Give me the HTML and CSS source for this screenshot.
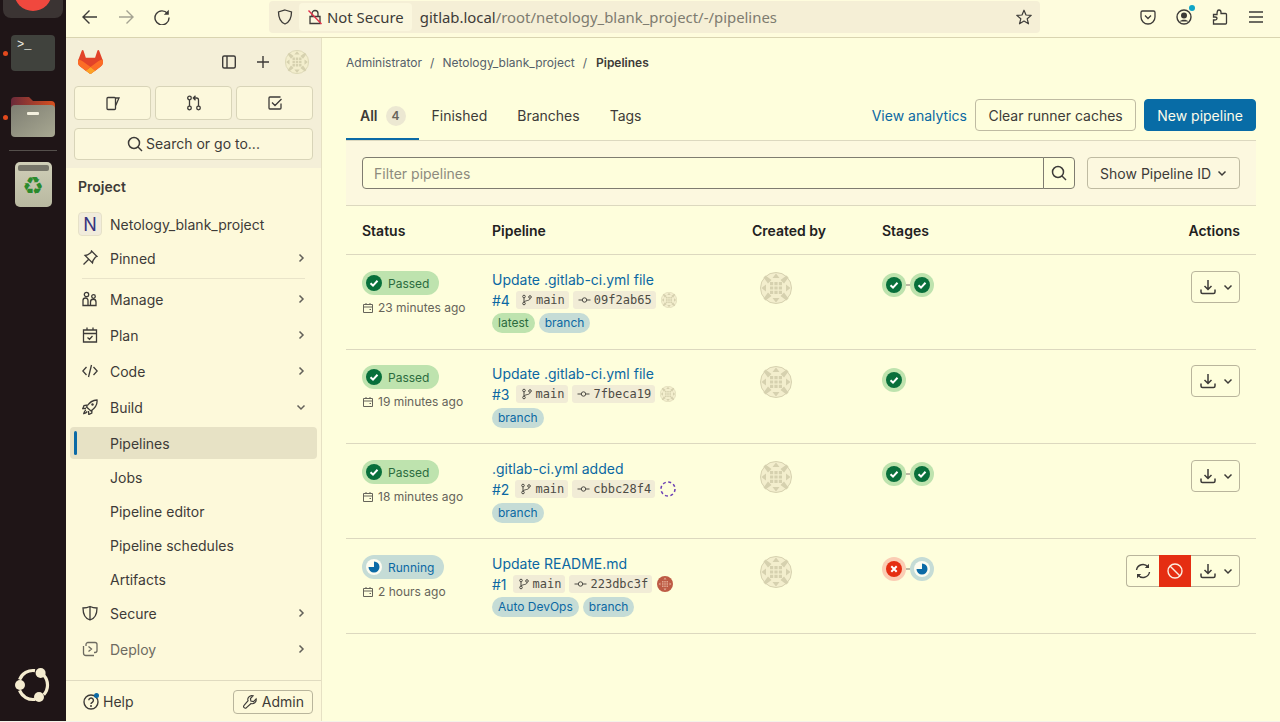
FILE: index.html
```html
<!DOCTYPE html>
<html>
<head>
    <title>Pipelines</title>
    <link rel="stylesheet" href="styles.css">
</head>
<body>
    <svg class="sprite" xmlns="http://www.w3.org/2000/svg">
        <symbol id="identicon" viewBox="0 0 32 32">
            <circle cx="16" cy="16" r="15.5" fill="#f3eecd" stroke="#d6d1af"/>
            <path d="M5.500 3.500 11.500 8 8 11.500 3.500 5.500zM26.500 3.500 20.500 8 24 11.500 28.500 5.500zM5.500 28.500 11.500 24 8 20.500 3.500 26.500zM26.500 28.500 20.500 24 24 20.500 28.500 26.500z" fill="#d6d1af"/>
            <path d="M16 1.500 19.500 6H12.500zM16 30.500 19.500 26H12.500zM1.500 16 6 12.500V19.500zM30.500 16 26 12.500V19.500z" fill="#d6d1af"/>
            <path d="M10 10h3.200v3.200h-3.200zM14.400 10h3.200v3.200h-3.200zM18.800 10h3.200v3.200h-3.200zM10 14.400h3.200v3.200h-3.200zM14.400 14.400h3.200v3.200h-3.200zM18.800 14.400h3.200v3.200h-3.200zM10 18.800h3.200v3.200h-3.200zM14.400 18.800h3.200v3.200h-3.200zM18.800 18.800h3.200v3.200h-3.200z" fill="#d6d1af"/>
        </symbol>
        <symbol id="identicon-red" viewBox="0 0 32 32">
            <circle cx="16" cy="16" r="16" fill="#bd5a44"/>
            <path d="M10 10h3v3h-3zM14.500 10h3v3h-3zM19 10h3v3h-3zM10 14.500h3v3h-3zM14.500 14.500h3v3h-3zM19 14.500h3v3h-3zM10 19h3v3h-3zM14.500 19h3v3h-3zM19 19h3v3h-3z" fill="#e0a58f"/>
            <path d="M16 3 19 7H13zM16 29 19 25H13zM3 16 7 13V19zM29 16 25 13V19z" fill="#e0a58f"/>
        </symbol>
        <symbol id="ci-passed" viewBox="0 0 16 16">
            <circle cx="8" cy="8" r="8" fill="#086f3b"/>
            <path d="M4.500 8.300 7 10.600 11.500 5.800" fill="none" stroke="#fff" stroke-width="2"/>
        </symbol>
        <symbol id="ci-failed" viewBox="0 0 16 16">
            <circle cx="8" cy="8" r="8" fill="#e52e12"/>
            <path d="M5.300 5.300 10.700 10.700M10.700 5.300 5.300 10.700" fill="none" stroke="#fff" stroke-width="2"/>
        </symbol>
        <symbol id="ci-running" viewBox="0 0 16 16">
            <circle cx="8" cy="8" r="8" fill="#fdfcf0"/>
            <path d="M8 2.500A5.500 5.500 0 1 1 2.500 8H8z" fill="#0b6aa6"/>
        </symbol>
        <symbol id="i-download" viewBox="0 0 16 16">
            <path d="M8 1v9M4.500 7 8 10.500 11.500 7M1 10.500V13a1.500 1.500 0 0 0 1.500 1.500h11A1.500 1.500 0 0 0 15 13v-2.500" fill="none" stroke="currentColor" stroke-width="1.500"/>
        </symbol>
        <symbol id="i-down" viewBox="0 0 16 16">
            <path d="M4.500 6.500 8 10l3.500-3.500" fill="none" stroke="currentColor" stroke-width="1.500"/>
        </symbol>
        <symbol id="i-right" viewBox="0 0 16 16">
            <path d="M6.500 4.500 10 8l-3.500 3.500" fill="none" stroke="currentColor" stroke-width="1.500"/>
        </symbol>
        <symbol id="i-search" viewBox="0 0 16 16">
            <circle cx="7" cy="7" r="5.500" fill="none" stroke="currentColor" stroke-width="1.500"/>
            <path d="m11 11 4 4" fill="none" stroke="currentColor" stroke-width="1.500"/>
        </symbol>
        <symbol id="i-calendar" viewBox="0 0 12 12">
            <path d="M1.500 2.500h9v8h-9zM1.500 5h9M4 1v2M8 1v2M7.500 7.500h1.500" fill="none" stroke="currentColor"/>
        </symbol>
        <symbol id="i-branch" viewBox="0 0 12 12">
            <circle cx="3" cy="2.500" r="1.300" fill="none" stroke="currentColor"/>
            <circle cx="3" cy="9.500" r="1.300" fill="none" stroke="currentColor"/>
            <circle cx="9" cy="3" r="1.300" fill="none" stroke="currentColor"/>
            <path d="M3 4v4M9 4.500C9 7 5 6 3 8" fill="none" stroke="currentColor"/>
        </symbol>
        <symbol id="i-commit" viewBox="0 0 12 12">
            <circle cx="6" cy="6" r="2.200" fill="none" stroke="currentColor"/>
            <path d="M0 6h3.500M8.500 6H12" fill="none" stroke="currentColor"/>
        </symbol>
    </svg>

    <div class="shell">
        <div class="dock">
            <div class="dock-firefox">
                <svg width="38" height="11" viewBox="0 0 38 11"><circle cx="19" cy="-8" r="19" fill="#f0483e"/></svg>
            </div>
            <div class="dock-app dock-terminal"><span class="dock-running"></span>&gt;_</div>
            <div class="dock-app dock-folder">
                <span class="dock-running"></span>
                <svg width="44" height="40" viewBox="0 0 44 40">
                    <defs>
                        <linearGradient id="folderTab" x1="0" x2="1"><stop offset="0" stop-color="#6a2a3a"/><stop offset="1" stop-color="#d8501f"/></linearGradient>
                        <linearGradient id="folderFront" x1="0" y1="0" x2="1" y2="1"><stop offset="0" stop-color="#7e7e72"/><stop offset="1" stop-color="#a8a892"/></linearGradient>
                    </defs>
                    <path d="M0 4a4 4 0 0 1 4-4h14l4 4h18a4 4 0 0 1 4 4v10H0z" fill="url(#folderTab)"/>
                    <rect y="8" width="44" height="32" rx="4" fill="url(#folderFront)"/>
                    <rect x="16" y="15" width="12" height="3" rx="1" fill="#f4f1df"/>
                </svg>
            </div>
            <div class="dock-sep"></div>
            <div class="dock-trash">
                <div class="dock-trash-lid"></div>
                <div class="dock-trash-mark">♻</div>
            </div>
            <svg class="dock-logo" width="36" height="36" viewBox="0 0 36 36">
                <path d="M4.560 11.570A14.500 14.500 0 0 1 20 2.640M28.800 7.300A14.500 14.500 0 0 1 28.800 26.700M20 31.360A14.500 14.500 0 0 1 4.560 22.430" fill="none" stroke="#f5ecd0" stroke-width="3.200"/>
                <circle cx="25.600" cy="5" r="5" fill="#f5ecd0"/>
                <circle cx="5" cy="17" r="5" fill="#f5ecd0"/>
                <circle cx="24" cy="29" r="5" fill="#f5ecd0"/>
            </svg>
        </div>

        <div class="window">
            <div class="toolbar">
                <div class="tool-btn">
                    <svg width="16" height="16" viewBox="0 0 16 16"><path d="M15 8H1.500M7.500 1.500 1 8l6.500 6.500" fill="none" stroke="currentColor" stroke-width="1.400"/></svg>
                </div>
                <div class="tool-btn tool-off">
                    <svg width="16" height="16" viewBox="0 0 16 16"><path d="M1 8h13.500M8.500 1.500 15 8l-6.500 6.500" fill="none" stroke="currentColor" stroke-width="1.400"/></svg>
                </div>
                <div class="tool-btn">
                    <svg width="16" height="16" viewBox="0 0 16 16"><path d="M13.500 4.500A7 7 0 1 0 15 8.500" fill="none" stroke="currentColor" stroke-width="1.400"/><path d="M14.800 0.800v5h-5z" fill="currentColor"/></svg>
                </div>
                <div class="urlbar">
                    <svg class="url-shield" width="16" height="16" viewBox="0 0 16 16"><path d="M8 1 14.500 3C14.500 9 13 13 8 15 3 13 1.500 9 1.500 3z" fill="none" stroke="currentColor" stroke-width="1.300"/></svg>
                    <div class="url-chip">
                        <svg width="16" height="16" viewBox="0 0 16 16"><path d="M3 7.500h10V14.500H3zM5 7.500V4.500a3 3 0 0 1 6 0v3" fill="none" stroke="#3d3b38" stroke-width="1.300"/><path d="M1.500 1.500 14.500 15" stroke="#e2324a" stroke-width="1.400"/></svg>
                        Not Secure
                    </div>
                    <div class="url-text"><b>gitlab.local</b>/root/netology_blank_project/-/pipelines</div>
                    <svg class="url-star" width="16" height="16" viewBox="0 0 16 16"><path d="M8 1.200 10 6l5.200.4-4 3.400 1.300 5L8 12.100 3.500 14.800l1.300-5-4-3.400L6 6z" fill="none" stroke="currentColor" stroke-width="1.200" stroke-linejoin="round"/></svg>
                </div>
                <div class="tool-right">
                    <div class="tool-btn">
                        <svg width="16" height="16" viewBox="0 0 16 16"><path d="M2.500 2h11A1.500 1.500 0 0 1 15 3.500V8A7 7 0 0 1 1 8V3.500A1.500 1.500 0 0 1 2.500 2z" fill="none" stroke="currentColor" stroke-width="1.300"/><path d="M5 6.500 8 9.500l3-3" fill="none" stroke="currentColor" stroke-width="1.300"/></svg>
                    </div>
                    <div class="tool-btn">
                        <svg width="16" height="16" viewBox="0 0 16 16"><circle cx="8" cy="8" r="7" fill="none" stroke="currentColor" stroke-width="1.400"/><circle cx="8" cy="6.500" r="3" fill="currentColor"/><path d="M3.500 12.500c2-2.200 7-2.200 9 0z" fill="currentColor"/></svg>
                        <span class="tool-dot"></span>
                    </div>
                    <div class="tool-btn">
                        <svg width="16" height="16" viewBox="0 0 16 16"><path d="M1.500 5.500h3.500C5 2 5.500 1 7 1s2 1 2 2.500V4.500h4.500a1 1 0 0 1 1 1V14a1 1 0 0 1-1 1H1.500v-4H3c1.500 0 2-.5 2-1.500S4.500 8 3 8H1.500z" fill="none" stroke="currentColor" stroke-width="1.300"/></svg>
                    </div>
                    <div class="tool-btn">
                        <svg width="16" height="16" viewBox="0 0 16 16"><path d="M1 3h14M1 8h14M1 13h14" fill="none" stroke="currentColor" stroke-width="1.300"/></svg>
                    </div>
                </div>
            </div>

            <div class="app">
                <aside class="sidebar">
                    <div class="side-head">
                        <div class="side-top">
                            <svg width="25" height="24" viewBox="0 0 25 24">
                                <path d="m24.507 9.500-.034-.090L21.082.562a.896.896 0 0 0-1.694.091l-2.290 7.010H7.825L5.535.653a.898.898 0 0 0-1.694-.090L.451 9.411.416 9.500a6.297 6.297 0 0 0 2.090 7.278l.012.010.030.022 5.160 3.867 2.560 1.935 1.554 1.176a1.051 1.051 0 0 0 1.268 0l1.555-1.176 2.560-1.935 5.197-3.890.014-.010A6.297 6.297 0 0 0 24.507 9.500Z" fill="#e24329"/>
                                <path d="m24.507 9.500-.034-.090a11.440 11.440 0 0 0-4.560 2.051l-7.447 5.632 4.742 3.584 5.197-3.890.014-.010A6.297 6.297 0 0 0 24.507 9.500Z" fill="#fc6d26"/>
                                <path d="m7.707 20.677 2.560 1.935 1.555 1.176a1.051 1.051 0 0 0 1.268 0l1.555-1.176 2.560-1.935-4.743-3.584-4.755 3.584Z" fill="#fca326"/>
                                <path d="M5.010 11.461a11.430 11.430 0 0 0-4.560-2.050L.416 9.500a6.297 6.297 0 0 0 2.090 7.278l.012.010.030.022 5.160 3.867 4.745-3.584-7.444-5.632Z" fill="#fc6d26"/>
                            </svg>
                            <div class="side-top-right">
                                <svg width="16" height="16" viewBox="0 0 16 16"><rect x="1.700" y="2" width="12.600" height="12" rx="1.500" fill="none" stroke="currentColor" stroke-width="1.400"/><path d="M6 2v12" stroke="currentColor" stroke-width="1.400"/></svg>
                                <svg class="side-plus" width="16" height="16" viewBox="0 0 16 16"><path d="M8 2v12M2 8h12" stroke="currentColor" stroke-width="1.400"/></svg>
                                <svg width="24" height="24"><use href="#identicon"/></svg>
                            </div>
                        </div>
                        <div class="side-btns">
                            <div class="side-btn">
                                <svg width="16" height="16" viewBox="0 0 16 16"><path d="M10.500 13.500V3.500a1 1 0 0 0-1-1H3a1 1 0 0 0-1 1v10a1 1 0 0 0 1 1h6.500a1 1 0 0 0 1-1zM10.500 3h3.500l-3.500 8" fill="none" stroke="currentColor" stroke-width="1.300"/></svg>
                            </div>
                            <div class="side-btn">
                                <svg width="16" height="16" viewBox="0 0 16 16"><circle cx="3.500" cy="3" r="1.800" fill="none" stroke="currentColor" stroke-width="1.300"/><circle cx="3.500" cy="13" r="1.800" fill="none" stroke="currentColor" stroke-width="1.300"/><circle cx="12.500" cy="13" r="1.800" fill="none" stroke="currentColor" stroke-width="1.300"/><path d="M3.500 5v6M12.500 11V5a2 2 0 0 0-2-2H8M9.500 .8 7.300 3l2.200 2.200" fill="none" stroke="currentColor" stroke-width="1.300"/></svg>
                            </div>
                            <div class="side-btn">
                                <svg width="16" height="16" viewBox="0 0 16 16"><path d="M14 8.500V13a1 1 0 0 1-1 1H3a1 1 0 0 1-1-1V3a1 1 0 0 1 1-1h10.500M5 7.500 8 10.500 14.500 4" fill="none" stroke="currentColor" stroke-width="1.300"/></svg>
                            </div>
                        </div>
                        <div class="side-search">
                            <svg width="16" height="16"><use href="#i-search"/></svg>
                            Search or go to...
                        </div>
                    </div>

                    <div class="side-title">Project</div>
                    <div class="nav-project"><span class="project-box">N</span>Netology_blank_project</div>
                    <div class="nav-item">
                        <svg class="nav-icon" width="16" height="16" viewBox="0 0 16 16"><path d="M9.500 1 15 6.500 13.500 7 11 10.500 10.500 13 3 5.500 5.500 5 9 2.500zM6.500 9.500 1.500 14.500" fill="none" stroke="currentColor" stroke-width="1.300"/></svg>
                        Pinned
                        <svg class="nav-arrow" width="16" height="16"><use href="#i-right"/></svg>
                    </div>
                    <div class="nav-line"></div>
                    <div class="nav-item">
                        <svg class="nav-icon" width="16" height="16" viewBox="0 0 16 16"><circle cx="4.500" cy="3.500" r="2.200" fill="none" stroke="currentColor" stroke-width="1.300"/><circle cx="11.500" cy="5.500" r="1.800" fill="none" stroke="currentColor" stroke-width="1.300"/><path d="M1 14.500V9.500a2.500 2.500 0 0 1 5 0v5zM8.500 14.500V11a2.500 2.500 0 0 1 5.500 0v3.500zM1 14.500h13" fill="none" stroke="currentColor" stroke-width="1.300"/></svg>
                        Manage
                        <svg class="nav-arrow" width="16" height="16"><use href="#i-right"/></svg>
                    </div>
                    <div class="nav-item">
                        <svg class="nav-icon" width="16" height="16" viewBox="0 0 16 16"><path d="M1.500 3h13v12h-13zM1.500 6.500h13M5 .5V3M11 .5V3M5.500 10.500 7.500 12.300 10.500 9" fill="none" stroke="currentColor" stroke-width="1.300"/></svg>
                        Plan
                        <svg class="nav-arrow" width="16" height="16"><use href="#i-right"/></svg>
                    </div>
                    <div class="nav-item">
                        <svg class="nav-icon" width="16" height="16" viewBox="0 0 16 16"><path d="M4.500 4 .8 8l3.700 4M11.500 4l3.700 4-3.700 4M9.500 2 6.500 14" fill="none" stroke="currentColor" stroke-width="1.300"/></svg>
                        Code
                        <svg class="nav-arrow" width="16" height="16"><use href="#i-right"/></svg>
                    </div>
                    <div class="nav-item">
                        <svg class="nav-icon" width="16" height="16" viewBox="0 0 16 16"><path d="M15 1c.500 4-1 7.500-6 11L4.500 8C7.500 3 11 1 15 1zM6 6 2 6.500.8 9.500 4 9.500M10 10.500 9.800 14l-3 1.500-.3-3.500M3.800 11C2.500 12 2 13.500 1.800 14.500 3 14.300 4.500 13.500 5.300 12.500" fill="none" stroke="currentColor" stroke-width="1.300"/><circle cx="10.500" cy="5.500" r="1.200" fill="currentColor"/></svg>
                        Build
                        <svg class="nav-arrow" width="16" height="16"><use href="#i-down"/></svg>
                    </div>
                    <div class="nav-sub nav-active">Pipelines</div>
                    <div class="nav-sub">Jobs</div>
                    <div class="nav-sub">Pipeline editor</div>
                    <div class="nav-sub">Pipeline schedules</div>
                    <div class="nav-sub">Artifacts</div>
                    <div class="nav-item">
                        <svg class="nav-icon" width="16" height="16" viewBox="0 0 16 16"><path d="M8 1.500C10 2.500 12.500 3 15 3c0 6-2 10.500-7 12C3 13.500 1 9 1 3c2.500 0 5-.5 7-1.500zM8 1.500V15" fill="none" stroke="currentColor" stroke-width="1.300"/></svg>
                        Secure
                        <svg class="nav-arrow" width="16" height="16"><use href="#i-right"/></svg>
                    </div>
                    <div class="nav-item nav-fade">
                        <svg class="nav-icon" width="16" height="16" viewBox="0 0 16 16"><path d="M1.500 5v7A2.500 2.500 0 0 0 4 14.500h8M4 5V3.500A2 2 0 0 1 6 1.500h7a2 2 0 0 1 2 2v6a2 2 0 0 1-2 2h-1M6.500 5.500 9.500 8l-3 2.500" fill="none" stroke="currentColor" stroke-width="1.300"/></svg>
                        Deploy
                        <svg class="nav-arrow" width="16" height="16"><use href="#i-right"/></svg>
                    </div>

                    <div class="side-foot">
                        <div class="side-help">
                            <svg width="16" height="16" viewBox="0 0 16 16"><circle cx="8" cy="8" r="7" fill="none" stroke="currentColor" stroke-width="1.400"/><path d="M5.800 6.300a2.300 2.300 0 1 1 3.500 2C8.400 8.900 8 9.300 8 10" fill="none" stroke="currentColor" stroke-width="1.400"/><circle cx="8" cy="12" r="1" fill="currentColor"/></svg>
                            <span class="help-dot"></span>
                            Help
                        </div>
                        <div class="side-admin">
                            <svg width="14" height="14" viewBox="0 0 16 16"><path d="M15 4.500 12 7.500 9 7 8.500 4l3-3C9 .3 6 1.500 5.500 4.500c-.1.700 0 1.500.3 2L1.200 11.800a1.800 1.800 0 0 0 2.800 2.600L9.200 9.700c2.800 1 6.600-1.500 5.800-5.200z" fill="none" stroke="currentColor" stroke-width="1.300"/></svg>
                            Admin
                        </div>
                    </div>
                </aside>

                <main class="main">
                    <div class="crumbs">
                        <span>Administrator</span><i>/</i><span>Netology_blank_project</span><i>/</i><b>Pipelines</b>
                    </div>

                    <div class="tabs-row">
                        <div class="tabs">
                            <div class="tab tab-on">All <span class="tab-count">4</span></div>
                            <div class="tab">Finished</div>
                            <div class="tab">Branches</div>
                            <div class="tab">Tags</div>
                        </div>
                        <div class="tab-actions">
                            <a class="link">View analytics</a>
                            <div class="btn">Clear runner caches</div>
                            <div class="btn btn-blue">New pipeline</div>
                        </div>
                    </div>

                    <div class="filter">
                        <div class="filter-input">Filter pipelines</div>
                        <div class="filter-go"><svg width="16" height="16"><use href="#i-search"/></svg></div>
                        <div class="btn filter-show">Show Pipeline ID <svg width="16" height="16"><use href="#i-down"/></svg></div>
                    </div>

                    <div class="grid grid-head">
                        <div>Status</div>
                        <div>Pipeline</div>
                        <div>Created by</div>
                        <div>Stages</div>
                        <div class="head-actions">Actions</div>
                    </div>

                    <div class="grid row">
                        <div>
                            <div class="status status-ok"><svg width="16" height="16"><use href="#ci-passed"/></svg>Passed</div>
                            <div class="when"><svg width="12" height="12"><use href="#i-calendar"/></svg>23 minutes ago</div>
                        </div>
                        <div>
                            <a class="link title">Update .gitlab-ci.yml file</a>
                            <div class="meta">
                                <a class="link">#4</a>
                                <span class="ref"><svg width="12" height="12"><use href="#i-branch"/></svg>main</span>
                                <span class="ref"><svg width="13" height="12"><use href="#i-commit"/></svg>09f2ab65</span>
                                <svg class="mini-ava" width="16" height="16"><use href="#identicon"/></svg>
                            </div>
                            <div class="labels"><span class="label label-green">latest</span><span class="label">branch</span></div>
                        </div>
                        <div><svg class="avatar" width="32" height="32"><use href="#identicon"/></svg></div>
                        <div class="stages">
                            <span class="stage stage-ok"><svg width="16" height="16"><use href="#ci-passed"/></svg></span><span class="stage-link"></span><span class="stage stage-ok"><svg width="16" height="16"><use href="#ci-passed"/></svg></span>
                        </div>
                        <div class="actions">
                            <div class="act act-dl"><svg width="16" height="16"><use href="#i-download"/></svg><svg width="16" height="16"><use href="#i-down"/></svg></div>
                        </div>
                    </div>

                    <div class="grid row row-short">
                        <div>
                            <div class="status status-ok"><svg width="16" height="16"><use href="#ci-passed"/></svg>Passed</div>
                            <div class="when"><svg width="12" height="12"><use href="#i-calendar"/></svg>19 minutes ago</div>
                        </div>
                        <div>
                            <a class="link title">Update .gitlab-ci.yml file</a>
                            <div class="meta">
                                <a class="link">#3</a>
                                <span class="ref"><svg width="12" height="12"><use href="#i-branch"/></svg>main</span>
                                <span class="ref"><svg width="13" height="12"><use href="#i-commit"/></svg>7fbeca19</span>
                                <svg class="mini-ava" width="16" height="16"><use href="#identicon"/></svg>
                            </div>
                            <div class="labels"><span class="label">branch</span></div>
                        </div>
                        <div><svg class="avatar" width="32" height="32"><use href="#identicon"/></svg></div>
                        <div class="stages">
                            <span class="stage stage-ok"><svg width="16" height="16"><use href="#ci-passed"/></svg></span>
                        </div>
                        <div class="actions">
                            <div class="act act-dl"><svg width="16" height="16"><use href="#i-download"/></svg><svg width="16" height="16"><use href="#i-down"/></svg></div>
                        </div>
                    </div>

                    <div class="grid row row-low">
                        <div>
                            <div class="status status-ok"><svg width="16" height="16"><use href="#ci-passed"/></svg>Passed</div>
                            <div class="when"><svg width="12" height="12"><use href="#i-calendar"/></svg>18 minutes ago</div>
                        </div>
                        <div>
                            <a class="link title">.gitlab-ci.yml added</a>
                            <div class="meta">
                                <a class="link">#2</a>
                                <span class="ref"><svg width="12" height="12"><use href="#i-branch"/></svg>main</span>
                                <span class="ref"><svg width="13" height="12"><use href="#i-commit"/></svg>cbbc28f4</span>
                                <svg class="mini-ava" width="16" height="16" viewBox="0 0 16 16"><circle cx="8" cy="8" r="7" fill="none" stroke="#6b3fb5" stroke-width="1.500" stroke-dasharray="3 2.500"/></svg>
                            </div>
                            <div class="labels"><span class="label">branch</span></div>
                        </div>
                        <div><svg class="avatar" width="32" height="32"><use href="#identicon"/></svg></div>
                        <div class="stages">
                            <span class="stage stage-ok"><svg width="16" height="16"><use href="#ci-passed"/></svg></span><span class="stage-link"></span><span class="stage stage-ok"><svg width="16" height="16"><use href="#ci-passed"/></svg></span>
                        </div>
                        <div class="actions">
                            <div class="act act-dl"><svg width="16" height="16"><use href="#i-download"/></svg><svg width="16" height="16"><use href="#i-down"/></svg></div>
                        </div>
                    </div>

                    <div class="grid row">
                        <div>
                            <div class="status status-run"><svg width="16" height="16"><use href="#ci-running"/></svg>Running</div>
                            <div class="when"><svg width="12" height="12"><use href="#i-calendar"/></svg>2 hours ago</div>
                        </div>
                        <div>
                            <a class="link title">Update README.md</a>
                            <div class="meta">
                                <a class="link">#1</a>
                                <span class="ref"><svg width="12" height="12"><use href="#i-branch"/></svg>main</span>
                                <span class="ref"><svg width="13" height="12"><use href="#i-commit"/></svg>223dbc3f</span>
                                <svg class="mini-ava" width="16" height="16"><use href="#identicon-red"/></svg>
                            </div>
                            <div class="labels"><span class="label">Auto DevOps</span><span class="label">branch</span></div>
                        </div>
                        <div><svg class="avatar" width="32" height="32"><use href="#identicon"/></svg></div>
                        <div class="stages">
                            <span class="stage stage-bad"><svg width="16" height="16"><use href="#ci-failed"/></svg></span><span class="stage-link"></span><span class="stage stage-run"><svg width="16" height="16"><use href="#ci-running"/></svg></span>
                        </div>
                        <div class="actions">
                            <div class="act act-retry">
                                <svg width="16" height="16" viewBox="0 0 16 16"><path d="M1.500 7A6.500 6.500 0 0 1 13 4M14.500 9A6.500 6.500 0 0 1 3 12" fill="none" stroke="currentColor" stroke-width="1.400"/><path d="M14 .8V5H9.800zM2 15.200V11h4.200z" fill="currentColor"/></svg>
                            </div>
                            <div class="act act-cancel">
                                <svg width="16" height="16" viewBox="0 0 16 16"><circle cx="8" cy="8" r="7" fill="none" stroke="currentColor" stroke-width="1.400"/><path d="M3 3l10 10" stroke="currentColor" stroke-width="1.400"/></svg>
                            </div>
                            <div class="act act-dl act-join"><svg width="16" height="16"><use href="#i-download"/></svg><svg width="16" height="16"><use href="#i-down"/></svg></div>
                        </div>
                    </div>
                </main>
            </div>
        </div>
    </div>
</body>
</html>
```

FILE: styles.css
```css
* {
    box-sizing: border-box;
}
html, body {
    margin: 0;
    height: 722px;
    overflow: hidden;
}
body {
    background: #f4f3ea;
    font-family: Inter, "Noto Sans", sans-serif;
    font-size: 14px;
    color: #3d3b38;
}
.sprite {
    display: none;
}
svg {
    display: block;
    flex: none;
}
.shell {
    display: flex;
    height: 721px;
}

/* dock */
.dock {
    width: 66px;
    background: #1f1517;
    display: flex;
    flex-direction: column;
    align-items: center;
}
.dock-firefox {
    width: 60px;
    height: 18px;
    background: #3b3433;
    border-radius: 0 0 8px 8px;
    display: flex;
    justify-content: center;
    flex: none;
}
.dock-app {
    position: relative;
    width: 44px;
    flex: none;
}
.dock-running {
    position: absolute;
    left: -8px;
    width: 5px;
    height: 5px;
    border-radius: 50%;
    background: #e2491d;
}
.dock-terminal {
    margin-top: 17px;
    height: 36px;
    background: #40423d;
    border-radius: 4px;
    color: #f0efe6;
    font-family: "Liberation Mono", monospace;
    font-size: 12px;
    line-height: 14px;
    padding: 3px 0 0 6px;
}
.dock-terminal .dock-running {
    top: 16px;
}
.dock-folder {
    margin-top: 26px;
    height: 40px;
}
.dock-folder .dock-running {
    top: 18px;
}
.dock-sep {
    width: 48px;
    height: 1px;
    background: #55504c;
    margin-top: 13px;
    flex: none;
}
.dock-trash {
    margin-top: 11px;
    width: 37px;
    height: 45px;
    background: linear-gradient(#d0cfb8, #b8b8a0);
    border-radius: 5px;
    padding: 3px;
    flex: none;
}
.dock-trash-lid {
    height: 6px;
    background: #77766a;
    border-radius: 2px;
}
.dock-trash-mark {
    color: #2a8a2c;
    font-family: "DejaVu Sans", sans-serif;
    font-size: 24px;
    line-height: 30px;
    text-align: center;
}
.dock-logo {
    margin-top: auto;
    margin-bottom: 17px;
}

/* browser toolbar */
.window {
    flex: 1;
    display: flex;
    flex-direction: column;
    min-width: 0;
}
.toolbar {
    height: 38px;
    flex: none;
    display: flex;
    align-items: flex-start;
    background: #fefcdd;
    border-bottom: 1px solid #d9d4b0;
    padding: 1px 6px 0;
    font-family: "Noto Sans", sans-serif;
    color: #3d3b38;
}
.tool-btn {
    position: relative;
    width: 36px;
    height: 32px;
    display: flex;
    align-items: center;
    justify-content: center;
}
.tool-off {
    color: #a5a392;
}
.tool-dot {
    position: absolute;
    top: 4px;
    right: 7px;
    width: 6px;
    height: 6px;
    border-radius: 50%;
    background: #10a5c7;
}
.urlbar {
    flex: 1;
    margin-left: 89px;
    height: 32px;
    background: #f5efd6;
    border-radius: 4px;
    display: flex;
    align-items: center;
    padding: 0 8px 0 8px;
    font-size: 14.9px;
}
.url-chip {
    display: flex;
    align-items: center;
    gap: 4px;
    height: 28px;
    margin-left: 6px;
    padding: 0 8px;
    background: #fbf7de;
    border-radius: 4px;
    white-space: nowrap;
}
.url-text {
    margin-left: 8px;
    color: #7e7c70;
    white-space: nowrap;
}
.url-text b {
    font-weight: 400;
    color: #3d3b38;
}
.url-star {
    margin-left: auto;
}
.tool-right {
    display: flex;
    margin-left: 90px;
}

/* sidebar */
.app {
    flex: 1;
    display: flex;
    min-height: 0;
}
.sidebar {
    width: 256px;
    flex: none;
    background: #fdf9da;
    border-right: 1px solid #e6e1c4;
    display: flex;
    flex-direction: column;
}
.side-head {
    background: #f4efd8;
    padding: 0 8px 8px;
}
.side-top {
    height: 48px;
    display: flex;
    align-items: center;
    justify-content: space-between;
    padding: 0 4px;
}
.side-top-right {
    display: flex;
    align-items: center;
    gap: 18px;
}
.side-plus {
    margin-right: -4px;
}
.side-btns {
    display: grid;
    grid-template-columns: repeat(3, 1fr);
    gap: 4px;
}
.side-btn, .side-search {
    background: #fcf8dc;
    border: 1px solid #d8d4b8;
    border-radius: 4px;
    display: flex;
    align-items: center;
    justify-content: center;
}
.side-btn {
    height: 34px;
}
.side-search {
    height: 32px;
    margin-top: 8px;
    gap: 3px;
    padding-bottom: 2px;
}
.side-search svg {
    margin-top: 2px;
}
.side-title {
    font-weight: 600;
    padding: 8px 12px 0;
    height: 30px;
    line-height: 22px;
}
.nav-project {
    height: 32px;
    margin: 10px 4px 2px;
    padding-left: 8px;
    display: flex;
    align-items: center;
    gap: 8px;
}
.project-box {
    width: 24px;
    height: 24px;
    border-radius: 4px;
    background: #f1ecdc;
    border: 1px solid #e6e1c8;
    color: #38347f;
    font-size: 18px;
    display: flex;
    align-items: center;
    justify-content: center;
}
.nav-item, .nav-sub {
    height: 32px;
    margin: 0 4px;
    display: flex;
    align-items: center;
    flex: none;
    border-radius: 4px;
}
.nav-item {
    padding: 0 8px 0 12px;
    margin-bottom: 4px;
}
.nav-fade {
    color: #6d6b61;
}
.nav-icon {
    margin-right: 12px;
}
.nav-arrow {
    margin-left: auto;
    color: #63615a;
}
.nav-line {
    height: 1px;
    background: #e9e4c9;
    margin: 0 16px 4px;
}
.nav-sub {
    padding-left: 40px;
    margin-bottom: 2px;
}
.nav-active {
    position: relative;
    background: #e7e2c5;
}
.nav-active::before {
    content: "";
    position: absolute;
    left: 4px;
    top: 4px;
    bottom: 4px;
    width: 3px;
    border-radius: 2px;
    background: #0b6aa6;
}
.side-foot {
    margin-top: auto;
    height: 41px;
    border-top: 1px solid #e0dbc0;
    display: flex;
    align-items: center;
    justify-content: space-between;
    padding: 0 8px 0 17px;
}
.side-help {
    position: relative;
    display: flex;
    align-items: center;
    gap: 4px;
    font-size: 14px;
    margin-top: 1px;
}
.help-dot {
    position: absolute;
    left: 11px;
    top: 0;
    width: 5px;
    height: 5px;
    border-radius: 50%;
    background: #0b6aa6;
}
.side-admin {
    display: flex;
    align-items: center;
    gap: 5px;
    height: 24px;
    padding: 0 8px 0 9px;
    border: 1px solid #b9b59c;
    border-radius: 4px;
    margin-top: 1px;
}

/* main */
.main {
    flex: 1;
    background: #fefedc;
    padding: 0 24px;
    min-width: 0;
}
.crumbs {
    height: 49px;
    display: flex;
    align-items: center;
    font-size: 12px;
    color: #55606a;
}
.crumbs i {
    font-style: normal;
    margin: 0 8px;
}
.crumbs b {
    margin-left: 1px;
    color: #3d3b38;
    font-weight: 600;
}
.tabs-row {
    height: 54px;
    display: flex;
    justify-content: space-between;
    border-bottom: 1px solid #dcd8bf;
}
.tabs {
    display: flex;
    gap: 2px;
}
.tab {
    padding: 4px 14px 0;
    height: 53px;
    display: flex;
    align-items: center;
    gap: 8px;
}
.tab-on {
    font-weight: 600;
    padding-top: 6px;
    padding-right: 13px;
    margin-right: -3px;
    border-bottom: 2px solid #0b6aa6;
}
.tab-count {
    width: 20px;
    height: 20px;
    border-radius: 50%;
    background: #ece8d2;
    color: #66645a;
    font-size: 12px;
    display: flex;
    align-items: center;
    justify-content: center;
}
.tab-actions {
    display: flex;
    align-items: center;
    height: 32px;
    margin-top: 12px;
}
.link {
    color: #0b68a3;
}
.btn {
    height: 32px;
    padding: 0 12.5px;
    border: 1px solid #bfbba2;
    border-radius: 4px;
    display: flex;
    align-items: center;
    margin-left: 8px;
    white-space: nowrap;
}
.btn-blue {
    padding: 0 12px;
    background: #086ca6;
    border-color: #086ca6;
    color: #fdfcea;
}
.filter {
    height: 65px;
    background: #fcf8df;
    border-bottom: 1px solid #dcd8bf;
    padding: 16px;
    display: flex;
}
.filter-input {
    flex: 1;
    height: 32px;
    background: #fefedc;
    border: 1px solid #7f7c70;
    border-radius: 4px 0 0 4px;
    padding-left: 11px;
    line-height: 32px;
    color: #8d8b7e;
}
.filter-go {
    width: 32px;
    height: 32px;
    margin-left: -1px;
    background: #fefedc;
    border: 1px solid #7f7c70;
    border-radius: 0 4px 4px 0;
    display: flex;
    align-items: center;
    justify-content: center;
}
.filter-show {
    margin-left: 12px;
    gap: 3px;
    padding: 0 9px 0 12px;
    background: #fcf8df;
}
.grid {
    display: grid;
    grid-template-columns: 130px 260px 130px 1fr auto;
    padding: 0 16px;
}
.grid-head {
    height: 49px;
    align-items: center;
    font-weight: 600;
    color: #22211f;
    border-bottom: 1px solid #dcd8bf;
}
.head-actions {
    text-align: right;
}
.row {
    height: 95px;
    border-bottom: 1px solid #dcd8bf;
    padding-top: 15px;
}
.row-short {
    height: 94px;
    padding-top: 14px;
}
.row-short .labels {
    margin-top: 4px;
}
.row-short .stages {
    margin-top: 4px;
}
.row-low .labels {
    margin-top: 4px;
}
.status {
    display: inline-flex;
    align-items: center;
    gap: 6px;
    height: 24px;
    margin-top: 1px;
    padding: 0 10px 0 4px;
    border-radius: 12px;
    font-size: 12px;
}
.status-ok {
    background: #bee3ae;
    color: #2b6b3e;
}
.status-run {
    background: #c5dcd6;
    color: #0b68a3;
}
.when {
    display: flex;
    align-items: center;
    gap: 4px;
    margin-top: 5px;
    font-size: 12px;
    line-height: 16px;
    color: #66645a;
}
.title {
    display: block;
    line-height: 20px;
}
.meta {
    display: flex;
    align-items: center;
    gap: 4px;
    height: 20px;
    white-space: nowrap;
}
.meta .link {
    margin-right: 2px;
}
.ref {
    display: inline-flex;
    align-items: center;
    gap: 3px;
    height: 18px;
    padding: 0 4px 0 5px;
    background: #f1ecd6;
    border-radius: 3px;
    font-family: "DejaVu Sans Mono", monospace;
    font-size: 12px;
    color: #4d4b45;
}
.mini-ava {
    margin-left: 1px;
}
.labels {
    display: flex;
    gap: 4px;
    margin-top: 3px;
}
.label {
    height: 20px;
    padding: 0 6px;
    border-radius: 10px;
    background: #c5dcd6;
    color: #0b68a3;
    font-size: 12px;
    line-height: 20px;
}
.label-green {
    background: #bee3ae;
    color: #2b6b3e;
}
.avatar {
    margin: 2px 0 0 8px;
}
.stages {
    display: flex;
    align-items: center;
    height: 24px;
    margin-top: 3px;
}
.stage {
    width: 24px;
    height: 24px;
    border-radius: 50%;
    display: flex;
    align-items: center;
    justify-content: center;
}
.stage-ok {
    background: #bee3ae;
}
.stage-bad {
    background: #fbcdb4;
}
.stage-run {
    background: #c5dcd6;
}
.stage-link {
    width: 4px;
    height: 2px;
    background: #bdb9a4;
}
.actions {
    display: flex;
    height: 32px;
    margin-top: 1px;
}
.act {
    height: 32px;
    border: 1px solid #b9b59c;
    display: flex;
    align-items: center;
    justify-content: center;
}
.act-dl {
    width: 49px;
    gap: 4px;
    padding-left: 8px;
    justify-content: flex-start;
    border-radius: 4px;
}
.act-join {
    border-radius: 0 4px 4px 0;
    border-left: 0;
    padding-left: 9px;
}
.act-retry {
    width: 33px;
    border-radius: 4px 0 0 4px;
    border-right: 0;
}
.act-cancel {
    width: 32px;
    background: #e52e12;
    border-color: #e52e12;
    color: #fdeee0;
}
```
